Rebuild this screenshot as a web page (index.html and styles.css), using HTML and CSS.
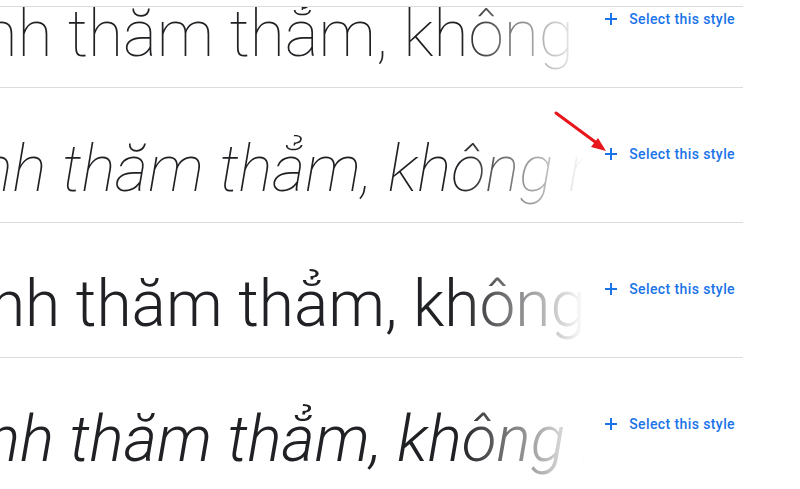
FILE: index.html
```html
<!DOCTYPE html>
<html lang="vi">
<head>
<meta charset="utf-8">
<link rel="stylesheet" href="styles.css">
</head>
<body>
<div class="page">
  <div class="topline"></div>
  <div class="list">
    <div class="row">
      <div class="sample w100">Bầu trời trong xanh thăm thẳm, không một gợn mây</div>
      <button class="select"><svg class="plus" viewBox="0 0 12 12"><path d="M6 0v12M0 6h12"/></svg>Select this style</button>
    </div>
    <div class="row">
      <div class="sample w100 it">Bầu trời trong xanh thăm thẳm, không một gợn mây</div>
      <button class="select"><svg class="plus" viewBox="0 0 12 12"><path d="M6 0v12M0 6h12"/></svg>Select this style</button>
    </div>
    <div class="row">
      <div class="sample w300">Bầu trời trong xanh thăm thẳm, không một gợn mây</div>
      <button class="select"><svg class="plus" viewBox="0 0 12 12"><path d="M6 0v12M0 6h12"/></svg>Select this style</button>
    </div>
    <div class="row">
      <div class="sample w300 it">Bầu trời trong xanh thăm thẳm, không một gợn mây</div>
      <button class="select"><svg class="plus" viewBox="0 0 12 12"><path d="M6 0v12M0 6h12"/></svg>Select this style</button>
    </div>
  </div>
  <svg class="arrow" viewBox="0 0 70 50" width="70" height="50">
    <path d="M3 3 L45 34" />
    <polygon points="53,41 38,37 45,28" />
  </svg>
</div>
</body>
</html>
```
FILE: styles.css
```css
html, body {
  margin: 0;
  padding: 0;
  background: #fff;
}
.page {
  position: relative;
  width: 800px;
  height: 489px;
  overflow: hidden;
}
.topline {
  position: absolute;
  left: 0;
  top: 0;
  width: 743px;
  height: 6px;
  background: #fff;
  border-bottom: 1px solid #dadce0;
  z-index: 2;
}
.list {
  margin-top: -47px;
  width: 743px;
}
.row {
  display: flex;
  height: 134px;
  border-bottom: 1px solid #dadce0;
}
.sample {
  flex: 1;
  min-width: 0;
  overflow: hidden;
  white-space: nowrap;
  text-indent: -471px;
  font-family: Roboto, sans-serif;
  font-size: 64px;
  line-height: 64px;
  color: #202124;
  padding-top: 50px;
  -webkit-mask-image: linear-gradient(to right, #000 0, #000 460px, transparent 585px);
  mask-image: linear-gradient(to right, #000 0, #000 460px, transparent 585px);
}
.w100 { font-weight: 100; }
.w300 { font-weight: 300; }
.it {
  font-style: italic;
  text-indent: -462px;
}
.select {
  align-self: flex-start;
  margin-top: 56px;
  display: flex;
  align-items: center;
  gap: 12px;
  background: none;
  border: 0;
  padding: 0 8px 0 0;
  font-family: Roboto, sans-serif;
  font-weight: 500;
  font-size: 14px;
  letter-spacing: 0.4px;
  line-height: 20px;
  color: #1a73e8;
  cursor: pointer;
}
.plus {
  width: 12px;
  height: 12px;
  stroke: #1a73e8;
  stroke-width: 2;
  fill: none;
}
.arrow {
  position: absolute;
  left: 553px;
  top: 110px;
  z-index: 3;
}
.arrow path {
  stroke: #e8161b;
  stroke-width: 3;
  stroke-linecap: round;
}
.arrow polygon {
  fill: #e8161b;
}
```
